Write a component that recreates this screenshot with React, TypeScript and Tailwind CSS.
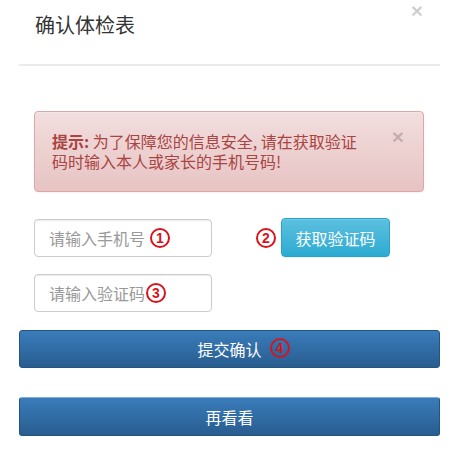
import React from "react";

const Mark = ({ n, className = "" }: { n: number; className?: string }) => (
  <span
    className={`inline-flex h-[20px] w-[20px] items-center justify-center rounded-full border-2 border-[#d7141c] text-[14px] font-bold leading-none text-[#d7141c] font-['Liberation_Sans',sans-serif] ${className}`}
  >
    {n}
  </span>
);

const App = () => {
  return (
    <div className="h-[452px] w-[465px] bg-white font-['Noto_Sans_CJK_SC',sans-serif]">
      {/* Modal header */}
      <div className="flex h-[64px] items-start justify-between pl-[35px] pr-[42px]">
        <h2 className="pt-[11px] text-[20px] leading-[28px] font-normal text-[#333]">确认体检表</h2>
        <span className="text-[21px] font-bold leading-[21px] text-black/20 font-['Liberation_Sans',sans-serif]">×</span>
      </div>
      <div className="ml-[19px] h-[2px] w-[421px] bg-[#ebebeb]" />

      {/* Alert */}
      <div className="relative ml-[34px] mt-[45px] h-[81px] w-[390px] rounded-[4px] border border-[#dca7a7] bg-gradient-to-b from-[#f2dede] to-[#e7c3c3] pl-[17px] pt-[19px] text-[16px] leading-[20px] text-[#a94442] shadow-[inset_0_1px_0_rgba(255,255,255,.25),0_1px_2px_rgba(0,0,0,.05)]">
        <p>
          <b>提示:</b> 为了保障您的信息安全, 请在获取验证
          <br />
          码时输入本人或家长的手机号码!
        </p>
        <span className="absolute right-[19px] top-[14px] text-[21px] font-bold leading-[21px] text-black/20 font-['Liberation_Sans',sans-serif]">×</span>
      </div>

      {/* Phone row */}
      <div className="ml-[34px] mt-[26px] flex items-center">
        <div className="flex h-[38px] w-[178px] items-center rounded-[4px] border border-[#ccc] pl-[14px] text-[16px] text-[#999] shadow-[inset_0_1px_1px_rgba(0,0,0,.075)]">
          请输入手机号
          <Mark n={1} className="ml-[5px]" />
        </div>
        <Mark n={2} className="ml-[44px]" />
        <button className="ml-[5px] h-[39px] w-[109px] rounded-[4px] border border-[#28a4c9] bg-gradient-to-b from-[#5bc0de] to-[#2aabd2] text-[16px] text-white shadow-[inset_0_1px_0_rgba(255,255,255,.15),0_1px_1px_rgba(0,0,0,.075)]">
          获取验证码
        </button>
      </div>

      {/* Code row */}
      <div className="ml-[34px] mt-[17px] flex h-[38px] w-[178px] items-center rounded-[4px] border border-[#ccc] pl-[14px] text-[16px] text-[#999] shadow-[inset_0_1px_1px_rgba(0,0,0,.075)]">
        请输入验证码
        <Mark n={3} className="ml-[1px]" />
      </div>

      {/* Actions */}
      <button className="ml-[19px] mt-[18px] flex h-[38px] w-[421px] items-center justify-center rounded-[3px] border border-[#245580] bg-gradient-to-b from-[#3a7cbb] to-[#285d8f] text-[16px] text-white">
        <span className="relative">
          提交确认
          <Mark n={4} className="absolute left-full top-[1px] ml-[8px] h-[19px] w-[19px]" />
        </span>
      </button>
      <button className="ml-[19px] mt-[29px] flex h-[39px] w-[421px] items-center justify-center rounded-[3px] border border-[#245580] border-t-[#7fb0dc] bg-gradient-to-b from-[#3a7cbb] to-[#285d8f] text-[16px] text-white">
        再看看
      </button>
    </div>
  );
};

export default App;
